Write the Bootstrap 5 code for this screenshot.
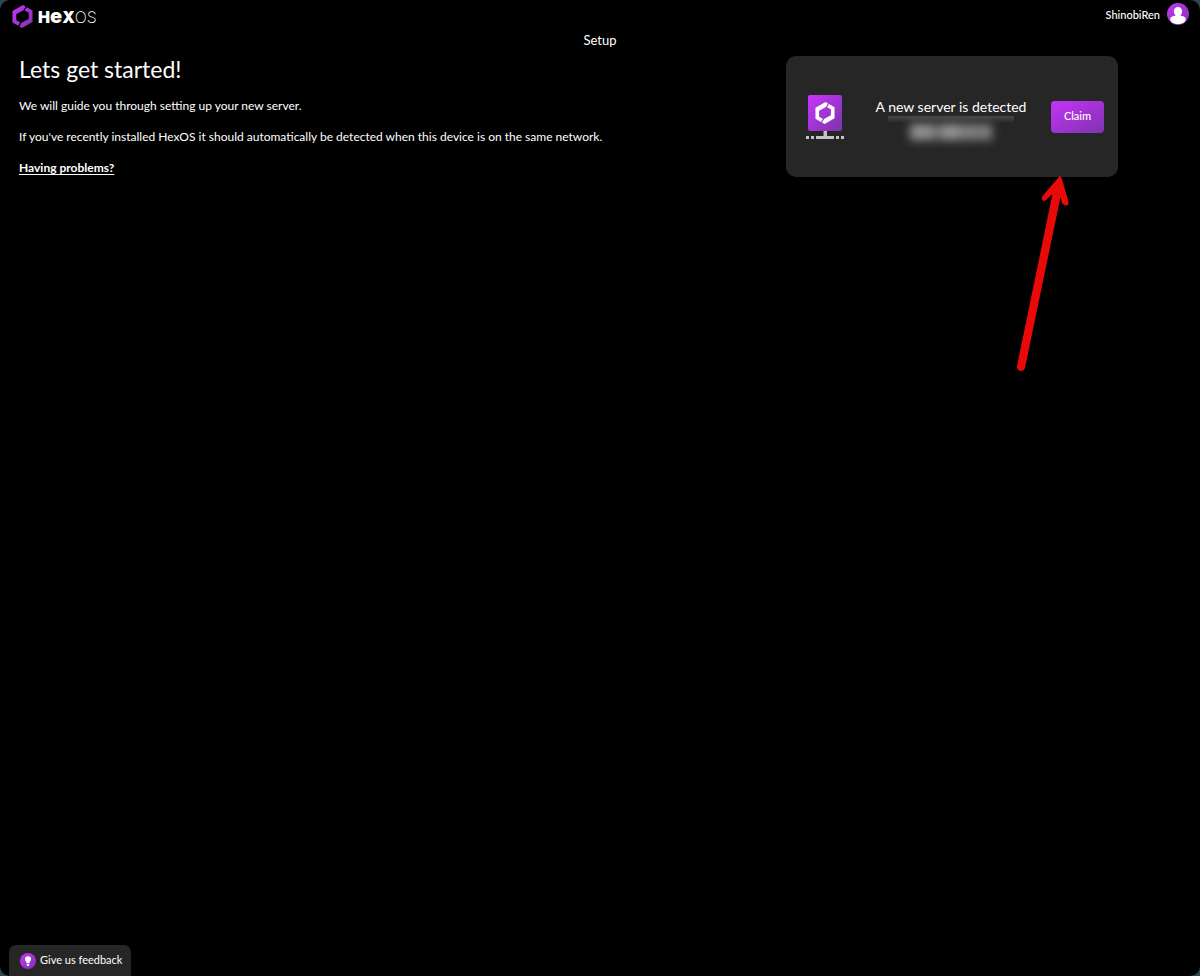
<!DOCTYPE html>
<html lang="en">
<head>
<meta charset="utf-8">
<meta name="viewport" content="width=device-width, initial-scale=1">
<title>HexOS - Setup</title>
<link href="https://cdn.jsdelivr.net/npm/bootstrap@5.3.0/dist/css/bootstrap.min.css" rel="stylesheet">
<style>
  body { background: #2f4650; color: #fff; font-family: Lato, sans-serif; font-size: 12px; line-height: 15px; }
  .app-window { background: #000; border-radius: 10px; }
  .top-bar { height: 33px; padding: 0 11px 0 12px; }
  .brand { font-family: Inter, sans-serif; font-size: 16px; line-height: 20px; gap: 5px; }
  .brand-hex { font-weight: 900; }
  .brand-e { font-size: 20px; line-height: 16px; }
  .brand-os { font-weight: 200; }
  .account { font-size: 11px; gap: 7px; padding-bottom: 5px; font-weight: 500; }
  .page-title { font-size: 13px; }
  .intro { padding: 7px 0 0 19px; }
  .intro h1 { font-size: 23px; line-height: 28px; margin-bottom: 15px; }
  .intro p { margin-bottom: 16px; }
  .help-link { font-weight: 700; text-underline-offset: 2px; }
  .server-area { padding: 8px 0 0 4px; }
  .server-card { width: 332px; height: 121px; background: #262626; border-radius: 10px; padding: 0 14px 0 20px; }
  .server-info { padding: 6px 0 0 7px; }
  .server-name { font-size: 14px; line-height: 18px; }
  .masked { width: 126px; height: 26px; }
  .masked-edge { height: 7px; background: linear-gradient(#484848, #262626); }
  .masked-text { width: 82px; height: 16px; margin-top: 1px; filter: blur(5px); background: linear-gradient(90deg, #929292 26%, #5c5c5c 33%, #929292 40%, #969696 58%, #787878 63%, #858585 74%, #787878 82%, #858585); }
  .btn-claim { --bs-btn-color: #fff; --bs-btn-hover-color: #fff; --bs-btn-active-color: #fff; width: 53px; height: 32px; padding: 0; border: 0; border-radius: 4px; font-size: 11px; font-weight: 500; background: linear-gradient(150deg, #c632f8, #7f33b0); }
  .pointer-arrow { top: 119px; left: 225px; pointer-events: none; }
  .btn-feedback { --bs-btn-color: #fff; --bs-btn-hover-color: #fff; --bs-btn-active-color: #fff; background: #262626; height: 31px; margin-left: 9px; padding: 0 9px 0 11px; gap: 4px; border: 0; border-radius: 7px 7px 0 0; font-size: 11px; }
</style>
</head>
<body>
<svg width="0" height="0" class="position-absolute" aria-hidden="true">
  <defs>
    <linearGradient id="purple" x1="0" y1="0" x2="1" y2="1"><stop stop-color="#c935fc"/><stop offset="1" stop-color="#7b34ac"/></linearGradient>
    <symbol id="hex" viewBox="0 0 22 24">
      <path d="M11.500 0 14.300 1.600 12 5.400 4.500 9.500V16L8.700 18.400 6.600 21.800.5 18.200V6.200ZM10.500 24 7.700 22.400 10 18.600 17.500 14.500V8L13.300 5.600 15.400 2.200 21.500 5.800V17.800Z" stroke="none"/>
    </symbol>
  </defs>
</svg>
<div class="app-window min-vh-100 d-flex flex-column">
  <header class="top-bar d-flex align-items-center justify-content-between">
    <a href="#" class="brand d-flex align-items-center text-white text-decoration-none" aria-label="HexOS">
      <svg width="21" height="23" fill="url(#purple)"><use href="#hex"/></svg>
      <span><span class="brand-hex">H<span class="brand-e">e</span>X</span><span class="brand-os">OS</span></span>
    </a>
    <a href="#" class="account d-flex align-items-center text-white text-decoration-none">
      <span>ShinobiRen</span>
      <svg width="22" height="22" viewBox="0 0 22 22" aria-hidden="true"><circle cx="11" cy="11" r="11" fill="url(#purple)"/><path d="M11 4c2.600 0 4.100 1.800 4.100 4.200 0 1.900-.7 3.400-1.900 4.200 3.300.4 5.600 1.700 5.600 3.600 0 3-3.600 5.200-7.800 5.200S3.200 19 3.200 16c0-1.900 2.300-3.200 5.600-3.600-1.200-.8-1.900-2.300-1.900-4.200C6.900 5.800 8.400 4 11 4z" fill="#fff"/></svg>
    </a>
  </header>
  <div class="page-title text-center">Setup</div>
  <main class="row g-0 flex-grow-1">
    <section class="intro col-7">
      <h1 class="fw-normal">Lets get started!</h1>
      <p>We will guide you through setting up your new server.</p>
      <p>If you've recently installed HexOS it should automatically be detected when this device is on the same network.</p>
      <a href="#" class="help-link text-white">Having problems?</a>
    </section>
    <section class="server-area col-5 d-flex justify-content-center align-items-start">
      <div class="server-card position-relative d-flex align-items-center justify-content-between">
        <svg width="38" height="44" viewBox="0 0 38 44" aria-hidden="true">
          <rect x="2" width="34" height="36" rx="2" fill="url(#purple)"/>
          <use href="#hex" x="9" y="7" width="20" height="22" fill="#fff"/>
          <path d="M17.500 36h3.500v5h7v3H10v-3h7.500zM0 41h3v3H0zm5 0h3v3H5zm25 0h3v3h-3zm5 0h3v3h-3z" fill="#c4c4c4"/>
        </svg>
        <div class="server-info d-flex flex-column align-items-center">
          <div class="server-name">A new server is detected</div>
          <div class="masked d-flex flex-column align-items-center" aria-hidden="true">
            <div class="masked-edge w-100"></div>
            <div class="masked-text"></div>
          </div>
        </div>
        <button type="button" class="btn btn-claim">Claim</button>
        <svg class="pointer-arrow position-absolute" width="64" height="200" viewBox="0 0 64 200" aria-hidden="true">
          <path d="M49 1Q50 1 51 4L57.500 27Q58 30 55.500 30.500Q53 31 51 28L49.500 22 14 193Q13 196 9.500 196Q5.500 195 6 191L41.500 19 35 25Q32 27 31 24.500Q30 23 32 20.500L47 3Q48 1 49 1z" fill="#e90909"/>
        </svg>
      </div>
    </section>
  </main>
  <footer class="d-flex">
    <button type="button" class="btn btn-feedback d-flex align-items-center">
      <svg width="16" height="16" viewBox="0 0 16 16" aria-hidden="true"><circle cx="8" cy="8" r="8" fill="url(#purple)"/><path d="M8 3.200a3 3 0 0 1 3 3c0 1.600-1.300 2-1.500 3.700h-3C6.300 8.200 5 7.800 5 6.200a3 3 0 0 1 3-3zM6.700 10.700h2.600v1.500L8.600 13H7.400l-.7-.8z" fill="#fff"/></svg>
      <span>Give us feedback</span>
    </button>
  </footer>
</div>
<script src="https://cdn.jsdelivr.net/npm/bootstrap@5.3.0/dist/js/bootstrap.bundle.min.js"></script>
</body>
</html>
